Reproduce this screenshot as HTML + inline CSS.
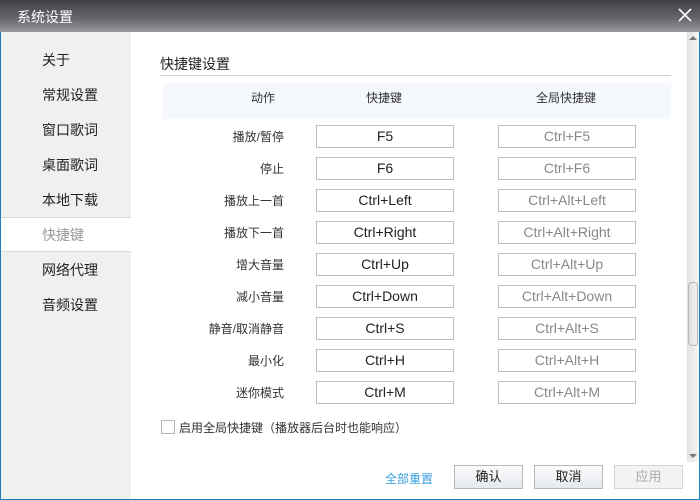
<!DOCTYPE html>
<html><head><meta charset="utf-8"><style>
*{margin:0;padding:0;box-sizing:border-box}
body{width:700px;height:500px;overflow:hidden;position:relative;background:#fff;font-family:"Liberation Sans","Noto Sans CJK SC",sans-serif;color:#222}
.title{position:absolute;left:0;top:0;width:700px;height:32px;background:linear-gradient(#404045,#68686e 60%,#9a9a9f);color:#fff;font-size:14px;line-height:34px;padding-left:17px}
.close{position:absolute;right:8px;top:8px;width:14px;height:14px}
.frame{position:absolute;left:0;top:32px;width:700px;height:468px;border:1px solid #1d7fb8;border-top:none}
.side{position:absolute;left:1px;top:32px;width:130px;height:467px;background:#f0f0f0}
.si{position:absolute;left:42px;font-size:14px;line-height:20px}
.sel{position:absolute;left:1px;top:217px;width:130px;height:35px;background:#fff;border-top:1px solid #d8d8d8;border-bottom:1px solid #d8d8d8}
.abs{position:absolute}
.box{position:absolute;height:23px;border:1px solid #b9bec6;background:#fff;text-align:center;font-size:14px;line-height:21px}
.lbl{position:absolute;right:416px;font-size:12px;text-align:right;color:#333}
.btn{position:absolute;top:465px;width:69px;height:24px;border:1px solid #b5b9be;background:linear-gradient(#fafbfc,#e6e9ed);font-size:13px;text-align:center;line-height:22px}
</style></head><body>
<div class="title">系统设置
<svg class="close" viewBox="0 0 14 14"><path d="M1 1L13 13M13 1L1 13" stroke="#fff" stroke-width="1.6"/></svg></div>
<div class="frame"></div>
<div class="side"></div>
<div class="sel"></div>
<div class="si" style="top:50px">关于</div>
<div class="si" style="top:85px">常规设置</div>
<div class="si" style="top:120px">窗口歌词</div>
<div class="si" style="top:155px">桌面歌词</div>
<div class="si" style="top:190px">本地下载</div>
<div class="si" style="top:225px;color:#999">快捷键</div>
<div class="si" style="top:260px">网络代理</div>
<div class="si" style="top:295px">音频设置</div>

<div class="abs" style="left:160px;top:54px;font-size:14px">快捷键设置</div>
<div class="abs" style="left:160px;top:75px;width:511px;height:1px;background:#d3d3d3"></div>
<div class="abs" style="left:163px;top:83px;width:508px;height:36px;background:#f5f8fc;font-size:12px;color:#333">
<span class="abs" style="left:88px;top:6px">动作</span>
<span class="abs" style="left:203px;top:6px">快捷键</span>
<span class="abs" style="left:373px;top:6px">全局快捷键</span></div>

<div class="lbl" style="top:128px">播放/暂停</div><div class="box" style="left:316px;top:125px;width:138px">F5</div><div class="box" style="left:498px;top:125px;width:138px;color:#888">Ctrl+F5</div>
<div class="lbl" style="top:160px">停止</div><div class="box" style="left:316px;top:157px;width:138px">F6</div><div class="box" style="left:498px;top:157px;width:138px;color:#888">Ctrl+F6</div>
<div class="lbl" style="top:192px">播放上一首</div><div class="box" style="left:316px;top:189px;width:138px">Ctrl+Left</div><div class="box" style="left:498px;top:189px;width:138px;color:#888">Ctrl+Alt+Left</div>
<div class="lbl" style="top:224px">播放下一首</div><div class="box" style="left:316px;top:221px;width:138px">Ctrl+Right</div><div class="box" style="left:498px;top:221px;width:138px;color:#888">Ctrl+Alt+Right</div>
<div class="lbl" style="top:256px">增大音量</div><div class="box" style="left:316px;top:253px;width:138px">Ctrl+Up</div><div class="box" style="left:498px;top:253px;width:138px;color:#888">Ctrl+Alt+Up</div>
<div class="lbl" style="top:288px">减小音量</div><div class="box" style="left:316px;top:285px;width:138px">Ctrl+Down</div><div class="box" style="left:498px;top:285px;width:138px;color:#888">Ctrl+Alt+Down</div>
<div class="lbl" style="top:320px">静音/取消静音</div><div class="box" style="left:316px;top:317px;width:138px">Ctrl+S</div><div class="box" style="left:498px;top:317px;width:138px;color:#888">Ctrl+Alt+S</div>
<div class="lbl" style="top:352px">最小化</div><div class="box" style="left:316px;top:349px;width:138px">Ctrl+H</div><div class="box" style="left:498px;top:349px;width:138px;color:#888">Ctrl+Alt+H</div>
<div class="lbl" style="top:384px">迷你模式</div><div class="box" style="left:316px;top:381px;width:138px">Ctrl+M</div><div class="box" style="left:498px;top:381px;width:138px;color:#888">Ctrl+Alt+M</div>

<div class="abs" style="left:161px;top:420px;width:14px;height:14px;border:1px solid #b0b6bd;background:#fff"></div>
<div class="abs" style="left:179px;top:419px;font-size:12px;color:#333">启用全局快捷键（播放器后台时也能响应）</div>

<div class="abs" style="left:687px;top:32px;width:12px;height:430px;background:linear-gradient(90deg,#e4e4e4,#f4f4f4)"></div>
<div class="abs" style="left:688px;top:282px;width:10px;height:64px;border:1px solid #b8b8b8;border-radius:4px;background:linear-gradient(90deg,#dedfe2,#f2f2f4)"></div>
<svg class="abs" style="left:689px;top:35px" width="8" height="6"><path d="M0 5L4 1L8 5Z" fill="#777"/></svg>
<svg class="abs" style="left:689px;top:453px" width="8" height="6"><path d="M0 1L4 5L8 1Z" fill="#777"/></svg>

<div class="abs" style="left:385px;top:470px;font-size:12px;color:#3a9ee0">全部重置</div>
<div class="btn" style="left:454px">确认</div>
<div class="btn" style="left:534px">取消</div>
<div class="btn" style="left:614px;color:#aaa;background:#f3f3f3;border-color:#d5d5d5">应用</div>
</body></html>
